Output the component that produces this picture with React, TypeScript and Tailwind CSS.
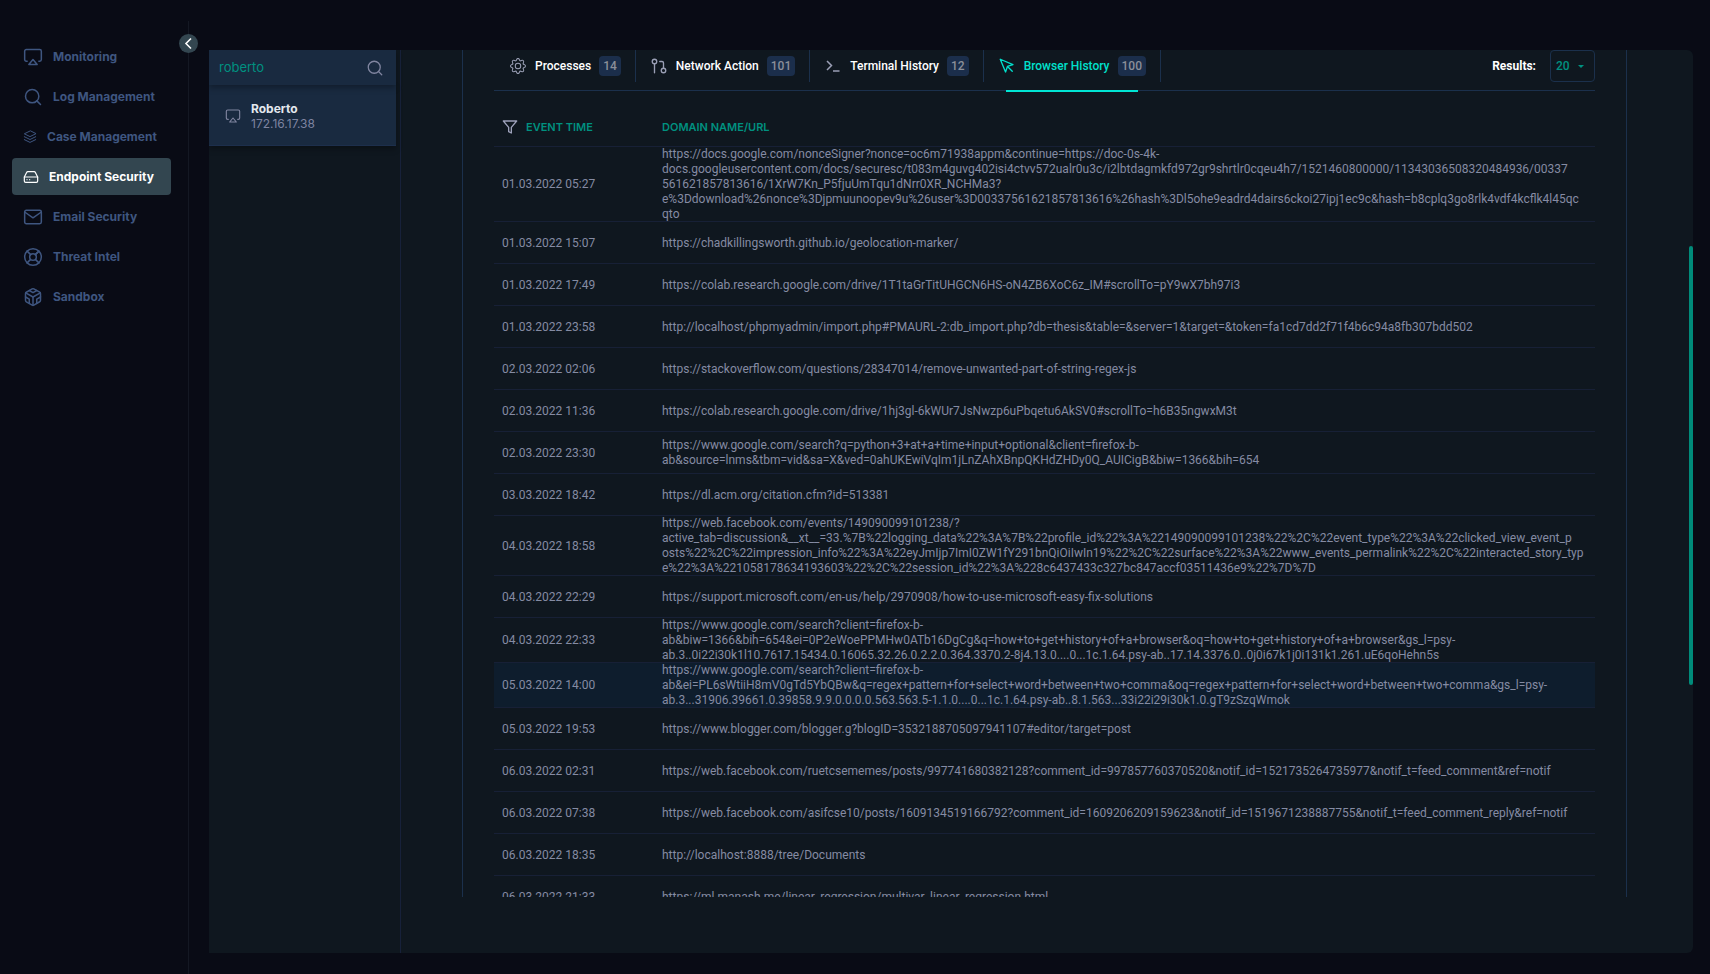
import React from "react";
import {
  FiAirplay,
  FiCodesandbox,
  FiFilter,
  FiGitPullRequest,
  FiHardDrive,
  FiLifeBuoy,
  FiMail,
  FiMousePointer,
  FiSearch,
} from "react-icons/fi";

type IconType = React.ComponentType<{ className?: string; size?: number; strokeWidth?: number }>;

function TerminalIcon({ className }: { className?: string }) {
  return (
    <svg className={className} viewBox="0 0 18 18" fill="none" stroke="currentColor" strokeWidth="1.5">
      <path d="M3 4l4.5 4.5L3 13M9 14h6.500" />
    </svg>
  );
}

function StackIcon({ className }: { className?: string }) {
  return (
    <svg className={className} viewBox="0 0 14 14" fill="none" stroke="currentColor" strokeLinejoin="round" strokeLinecap="round">
      <path d="M7 1L1.300 3.800 7 6.600l5.700-2.800zM1.300 6.700L7 9.500l5.700-2.800M1.300 9.600L7 12.400l5.700-2.800" />
    </svg>
  );
}

function GearIcon({ className }: { className?: string }) {
  return (
    <svg className={className} viewBox="-1 -1 18 18" fill="currentColor">
      <path d="M8 4.754a3.246 3.246 0 1 0 0 6.492 3.246 3.246 0 0 0 0-6.492M5.754 8a2.246 2.246 0 1 1 4.492 0 2.246 2.246 0 0 1-4.492 0" />
      <path d="M9.796 1.343c-.527-1.79-3.065-1.79-3.592 0l-.094.319a.873.873 0 0 1-1.255.52l-.292-.16c-1.64-.892-3.433.902-2.54 2.541l.159.292a.873.873 0 0 1-.52 1.255l-.319.094c-1.79.527-1.79 3.065 0 3.592l.319.094a.873.873 0 0 1 .52 1.255l-.16.292c-.892 1.64.901 3.434 2.541 2.54l.292-.159a.873.873 0 0 1 1.255.52l.094.319c.527 1.79 3.065 1.79 3.592 0l.094-.319a.873.873 0 0 1 1.255-.52l.292.16c1.64.893 3.434-.902 2.54-2.541l-.159-.292a.873.873 0 0 1 .52-1.255l.319-.094c1.79-.527 1.79-3.065 0-3.592l-.319-.094a.873.873 0 0 1-.52-1.255l.16-.292c.893-1.64-.902-3.433-2.541-2.54l-.292.159a.873.873 0 0 1-1.255-.52zm-2.633.283c.246-.835 1.428-.835 1.674 0l.094.319a1.873 1.873 0 0 0 2.693 1.115l.291-.16c.764-.415 1.6.42 1.184 1.185l-.159.292a1.873 1.873 0 0 0 1.116 2.692l.318.094c.835.246.835 1.428 0 1.674l-.319.094a1.873 1.873 0 0 0-1.115 2.693l.16.291c.415.764-.42 1.6-1.185 1.184l-.291-.159a1.873 1.873 0 0 0-2.693 1.116l-.094.318c-.246.835-1.428.835-1.674 0l-.094-.319a1.873 1.873 0 0 0-2.692-1.115l-.292.16c-.764.415-1.6-.42-1.184-1.185l.159-.291A1.873 1.873 0 0 0 1.945 8.93l-.319-.094c-.835-.246-.835-1.428 0-1.674l.319-.094A1.873 1.873 0 0 0 3.06 4.377l-.16-.292c-.415-.764.42-1.6 1.185-1.184l.292.159a1.873 1.873 0 0 0 2.692-1.115z" />
    </svg>
  );
}

const NAV: { label: string; icon: IconType; size: string; active?: boolean }[] = [
  { label: "Monitoring", icon: FiAirplay, size: "size-5" },
  { label: "Log Management", icon: FiSearch, size: "size-5" },
  { label: "Case Management", icon: StackIcon, size: "size-3.5" },
  { label: "Endpoint Security", icon: FiHardDrive, size: "size-4", active: true },
  { label: "Email Security", icon: FiMail, size: "size-5" },
  { label: "Threat Intel", icon: FiLifeBuoy, size: "size-5" },
  { label: "Sandbox", icon: FiCodesandbox, size: "size-5" },
];

const TABS: { label: string; count: number; icon: IconType; active?: boolean }[] = [
  { label: "Processes", count: 14, icon: GearIcon },
  { label: "Network Action", count: 101, icon: FiGitPullRequest },
  { label: "Terminal History", count: 12, icon: TerminalIcon },
  { label: "Browser History", count: 100, icon: FiMousePointer, active: true },
];

const ROWS: { time: string; url: string[]; active?: boolean }[] = [
  {
    time: "01.03.2022 05:27",
    url: [
      "https://docs.google.com/nonceSigner?nonce=oc6m71938appm&continue=https://doc-0s-4k-",
      "docs.googleusercontent.com/docs/securesc/t083m4guvg402isi4ctvv572ualr0u3c/i2lbtdagmkfd972gr9shrtlr0cqeu4h7/1521460800000/11343036508320484936/00337",
      "561621857813616/1XrW7Kn_P5fjuUmTqu1dNrr0XR_NCHMa3?",
      "e%3Ddownload%26nonce%3Djpmuunoopev9u%26user%3D00337561621857813616%26hash%3Dl5ohe9eadrd4dairs6ckoi27ipj1ec9c&hash=b8cplq3go8rlk4vdf4kcflk4l45qc",
      "qto",
    ],
  },
  { time: "01.03.2022 15:07", url: ["https://chadkillingsworth.github.io/geolocation-marker/"] },
  {
    time: "01.03.2022 17:49",
    url: ["https://colab.research.google.com/drive/1T1taGrTitUHGCN6HS-oN4ZB6XoC6z_IM#scrollTo=pY9wX7bh97i3"],
  },
  {
    time: "01.03.2022 23:58",
    url: [
      "http://localhost/phpmyadmin/import.php#PMAURL-2:db_import.php?db=thesis&table=&server=1&target=&token=fa1cd7dd2f71f4b6c94a8fb307bdd502",
    ],
  },
  {
    time: "02.03.2022 02:06",
    url: ["https://stackoverflow.com/questions/28347014/remove-unwanted-part-of-string-regex-js"],
  },
  {
    time: "02.03.2022 11:36",
    url: ["https://colab.research.google.com/drive/1hj3gl-6kWUr7JsNwzp6uPbqetu6AkSV0#scrollTo=h6B35ngwxM3t"],
  },
  {
    time: "02.03.2022 23:30",
    url: [
      "https://www.google.com/search?q=python+3+at+a+time+input+optional&client=firefox-b-",
      "ab&source=lnms&tbm=vid&sa=X&ved=0ahUKEwiVqIm1jLnZAhXBnpQKHdZHDy0Q_AUICigB&biw=1366&bih=654",
    ],
  },
  { time: "03.03.2022 18:42", url: ["https://dl.acm.org/citation.cfm?id=513381"] },
  {
    time: "04.03.2022 18:58",
    url: [
      "https://web.facebook.com/events/149090099101238/?",
      "active_tab=discussion&__xt__=33.%7B%22logging_data%22%3A%7B%22profile_id%22%3A%22149090099101238%22%2C%22event_type%22%3A%22clicked_view_event_p",
      "osts%22%2C%22impression_info%22%3A%22eyJmIjp7ImI0ZW1fY291bnQiOiIwIn19%22%2C%22surface%22%3A%22www_events_permalink%22%2C%22interacted_story_typ",
      "e%22%3A%221058178634193603%22%2C%22session_id%22%3A%228c6437433c327bc847accf03511436e9%22%7D%7D",
    ],
  },
  {
    time: "04.03.2022 22:29",
    url: ["https://support.microsoft.com/en-us/help/2970908/how-to-use-microsoft-easy-fix-solutions"],
  },
  {
    time: "04.03.2022 22:33",
    url: [
      "https://www.google.com/search?client=firefox-b-",
      "ab&biw=1366&bih=654&ei=0P2eWoePPMHw0ATb16DgCg&q=how+to+get+history+of+a+browser&oq=how+to+get+history+of+a+browser&gs_l=psy-",
      "ab.3..0i22i30k1l10.7617.15434.0.16065.32.26.0.2.2.0.364.3370.2-8j4.13.0....0...1c.1.64.psy-ab..17.14.3376.0..0j0i67k1j0i131k1.261.uE6qoHehn5s",
    ],
  },
  {
    time: "05.03.2022 14:00",
    active: true,
    url: [
      "https://www.google.com/search?client=firefox-b-",
      "ab&ei=PL6sWtiiH8mV0gTd5YbQBw&q=regex+pattern+for+select+word+between+two+comma&oq=regex+pattern+for+select+word+between+two+comma&gs_l=psy-",
      "ab.3...31906.39661.0.39858.9.9.0.0.0.0.563.563.5-1.1.0....0...1c.1.64.psy-ab..8.1.563...33i22i29i30k1.0.gT9zSzqWmok",
    ],
  },
  {
    time: "05.03.2022 19:53",
    url: ["https://www.blogger.com/blogger.g?blogID=3532188705097941107#editor/target=post"],
  },
  {
    time: "06.03.2022 02:31",
    url: [
      "https://web.facebook.com/ruetcsememes/posts/997741680382128?comment_id=997857760370520&notif_id=1521735264735977&notif_t=feed_comment&ref=notif",
    ],
  },
  {
    time: "06.03.2022 07:38",
    url: [
      "https://web.facebook.com/asifcse10/posts/1609134519166792?comment_id=1609206209159623&notif_id=1519671238887755&notif_t=feed_comment_reply&ref=notif",
    ],
  },
  { time: "06.03.2022 18:35", url: ["http://localhost:8888/tree/Documents"] },
  { time: "06.03.2022 21:33", url: ["https://ml.manash.me/linear_regression/multivar_linear_regression.html"] },
];

function Sidebar() {
  return (
    <aside className="relative mt-[21px] w-[189px] shrink-0 border-r border-[#141823] pt-[17px]">
      <button
        type="button"
        aria-label="Collapse menu"
        className="absolute -right-[10px] top-[13px] flex size-[19px] items-center justify-center rounded-full bg-[#334650] text-white"
      >
        <svg className="size-[13px]" viewBox="0 0 13 13" fill="none" stroke="currentColor" strokeWidth="1.6">
          <path d="M9 1.5L4 6.5l5 5" />
        </svg>
      </button>
      <nav className="flex flex-col gap-[3px] pl-3 pr-[17px]">
        {NAV.map(({ label, icon: Icon, size, active }) => (
          <a
            key={label}
            href="#"
            className={`flex h-[37px] items-center gap-[10px] rounded pl-[11px] text-[12px] font-bold whitespace-nowrap ${
              active ? "bg-[#334650] text-white" : "text-[#3f5680]"
            }`}
          >
            <Icon className={`${size} shrink-0`} strokeWidth={1.8} />
            {label}
          </a>
        ))}
      </nav>
    </aside>
  );
}

function HostList() {
  return (
    <section className="w-48 shrink-0 border-r border-[#17213a]">
      <div className="w-[187px]">
        <div className="relative z-10 flex h-[35px] items-center bg-[#192a40] pl-[10px] pr-3 shadow-[0_3px_6px_rgba(0,0,0,0.3)]">
          <input
            aria-label="Search endpoint"
            defaultValue="roberto"
            className="min-w-0 flex-1 bg-transparent text-[13px] text-[#009180] outline-none"
          />
          <FiSearch className="size-[18px] text-[#8085a0]" strokeWidth={1.7} />
        </div>
        <a
          href="#"
          className="flex h-[61px] items-center gap-[10px] border-b border-[#1d2f4c] bg-[#192a40] pl-4 pt-[2px] text-[12px] leading-[15px] shadow-[0_3px_6px_rgba(0,0,0,0.3)]"
        >
          <FiAirplay className="size-4 text-[#8085a0]" strokeWidth={1.7} />
          <span>
            <span className="block font-bold text-[#e3e8ee]">Roberto</span>
            <span className="block text-[#7e84a0]">172.16.17.38</span>
          </span>
        </a>
      </div>
    </section>
  );
}

function TabBar() {
  return (
    <div className="flex h-[41px] items-start justify-between border-b border-[#1b304c]">
      <div role="tablist" className="flex h-full pl-px">
        {TABS.map(({ label, count, icon: Icon, active }) => (
          <button
            key={label}
            type="button"
            role="tab"
            aria-selected={!!active}
            className={`relative flex h-8 items-center gap-2 border-r border-[#1b304c] px-[14px] font-[Roboto,sans-serif] text-[12px] font-medium whitespace-nowrap ${
              active ? "text-[#00e0cc]" : "text-white"
            }`}
          >
            <Icon className={`size-[18px] ${active ? "" : "text-[#9a9fb5]"}`} strokeWidth={1.8} />
            {label}
            <span className="rounded bg-[#1b2e4b] px-1 text-[12px] leading-5 text-[#8b8f99]">{count}</span>
            {active && <span className="absolute inset-x-[22px] -bottom-[10px] h-[2px] bg-[#00e5d4]" />}
          </button>
        ))}
      </div>
      <div className="flex items-center gap-[14px]">
        <label htmlFor="results" className="font-[Roboto,sans-serif] text-[12px] font-bold text-white">
          Results:
        </label>
        <div className="relative">
          <select
            id="results"
            defaultValue="20"
            className="h-8 w-[45px] appearance-none rounded-sm border border-[#1b304c] bg-transparent pl-[5px] font-[Roboto,sans-serif] text-[12px] font-medium text-[#009180] outline-none"
          >
            <option>20</option>
            <option>50</option>
          </select>
          <svg className="pointer-events-none absolute right-[11px] top-[15px] h-[3px] w-[6px]" viewBox="0 0 6 3" fill="#009180">
            <path d="M0 0h6L3 3z" />
          </svg>
        </div>
      </div>
    </div>
  );
}

function HistoryTable() {
  return (
    <table className="w-full table-fixed border-separate border-spacing-0 font-[Roboto,sans-serif] text-[12px] leading-[15px] text-[#858ba3]">
      <thead>
        <tr className="h-14 text-left font-[Inter,sans-serif] text-[11px] text-[#009180] shadow-[inset_0_-1px_0_#172036]">
          <th className="w-[168px] p-0 pl-2 pt-4 font-semibold">
            <span className="flex items-center gap-2">
              <FiFilter className="size-4 text-[#9da1ba]" strokeWidth={2} />
              EVENT TIME
            </span>
          </th>
          <th className="p-0 pt-4 font-semibold">DOMAIN NAME/URL</th>
        </tr>
      </thead>
      <tbody>
        {ROWS.map(({ time, url, active }) => (
          <tr key={time} className={`h-[42px] shadow-[inset_0_-1px_0_#172036] ${active ? "bg-[#0e1d2d]" : ""}`}>
            <td className="p-0 pl-2">{time}</td>
            <td className="p-0 whitespace-nowrap">
              {url.map((line) => (
                <span key={line} className="block">
                  {line}
                </span>
              ))}
            </td>
          </tr>
        ))}
      </tbody>
    </table>
  );
}

export default function App() {
  return (
    <div className="flex h-screen overflow-hidden bg-[#090b15] font-[Inter,sans-serif]">
      <Sidebar />
      <main className="relative mb-[21px] ml-5 mr-[17px] mt-[50px] flex min-w-0 flex-1 overflow-hidden rounded-r-md bg-[#0f171f]">
        <HostList />
        <section className="min-w-0 flex-1 pb-14 pl-[61px] pr-[66px]">
          <div className="h-full overflow-hidden border-x border-[#1b304c] px-[31px]">
            <TabBar />
            <HistoryTable />
          </div>
        </section>
        <div className="absolute right-0 top-[196px] h-[439px] w-1 rounded-sm bg-[#008b7a]" />
      </main>
    </div>
  );
}
